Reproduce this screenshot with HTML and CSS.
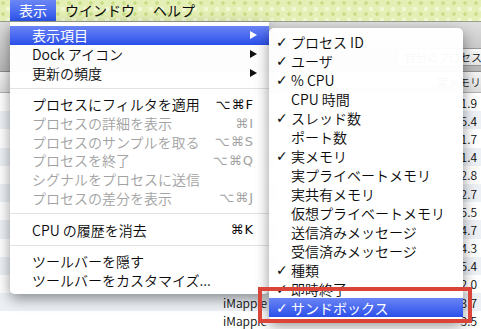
FILE: index.html
```html
<!DOCTYPE html>
<html lang="ja">
<head>
  <meta charset="UTF-8">
  <title>アクティビティモニタ - 表示メニュー</title>
  <link rel="stylesheet" href="styles.css">
</head>
<body>
  <div class="menubar">
    <span class="mb-item active">表示</span>
    <span class="mb-item">ウインドウ</span>
    <span class="mb-item">ヘルプ</span>
  </div>

  <!-- window behind the menus -->
  <div class="window">
    <div class="toolbar">
      <div class="filter">自分のプロセス</div>
    </div>
    <div class="thead">
      <span class="col-mem">実メモリ</span>
    </div>
    <div class="rows">
      <div class="row"><span class="col-name"></span><span class="col-mem">1.9</span></div>
      <div class="row"><span class="col-name"></span><span class="col-mem">5.4</span></div>
      <div class="row"><span class="col-name"></span><span class="col-mem">1.7</span></div>
      <div class="row"><span class="col-name"></span><span class="col-mem">1.4</span></div>
      <div class="row"><span class="col-name"></span><span class="col-mem">2.8</span></div>
      <div class="row"><span class="col-name"></span><span class="col-mem">2.7</span></div>
      <div class="row"><span class="col-name"></span><span class="col-mem">5.5</span></div>
      <div class="row"><span class="col-name"></span><span class="col-mem">4.7</span></div>
      <div class="row"><span class="col-name"></span><span class="col-mem">4.3</span></div>
      <div class="row"><span class="col-name"></span><span class="col-mem">5.4</span></div>
      <div class="row"><span class="col-name"></span><span class="col-mem">2.0</span></div>
      <div class="row"><span class="col-name">iMappie</span><span class="col-mem">3.7</span></div>
      <div class="row"><span class="col-name">iMappie</span><span class="col-mem">3.5</span></div>
    </div>
  </div>

  <!-- 表示 menu -->
  <div class="menu main-menu">
    <div class="item selected"><span>表示項目</span><span class="arrow"></span></div>
    <div class="item"><span>Dock アイコン</span><span class="arrow"></span></div>
    <div class="item"><span>更新の頻度</span><span class="arrow"></span></div>
    <div class="sep"></div>
    <div class="item"><span>プロセスにフィルタを適用</span><span class="key">⌥⌘F</span></div>
    <div class="item disabled"><span>プロセスの詳細を表示</span><span class="key">⌘I</span></div>
    <div class="item disabled"><span>プロセスのサンプルを取る</span><span class="key">⌥⌘S</span></div>
    <div class="item disabled"><span>プロセスを終了</span><span class="key">⌥⌘Q</span></div>
    <div class="item disabled"><span>シグナルをプロセスに送信</span></div>
    <div class="item disabled"><span>プロセスの差分を表示</span><span class="key">⌥⌘J</span></div>
    <div class="sep"></div>
    <div class="item"><span>CPU の履歴を消去</span><span class="key">⌘K</span></div>
    <div class="sep"></div>
    <div class="item"><span>ツールバーを隠す</span></div>
    <div class="item"><span>ツールバーをカスタマイズ...</span></div>
  </div>

  <!-- 表示項目 submenu -->
  <div class="menu sub-menu">
    <div class="item"><span class="check">✓</span>プロセス ID</div>
    <div class="item"><span class="check">✓</span>ユーザ</div>
    <div class="item"><span class="check">✓</span>% CPU</div>
    <div class="item"><span class="check"></span>CPU 時間</div>
    <div class="item"><span class="check">✓</span>スレッド数</div>
    <div class="item"><span class="check"></span>ポート数</div>
    <div class="item"><span class="check">✓</span>実メモリ</div>
    <div class="item"><span class="check"></span>実プライベートメモリ</div>
    <div class="item"><span class="check"></span>実共有メモリ</div>
    <div class="item"><span class="check"></span>仮想プライベートメモリ</div>
    <div class="item"><span class="check"></span>送信済みメッセージ</div>
    <div class="item"><span class="check"></span>受信済みメッセージ</div>
    <div class="item"><span class="check">✓</span>種類</div>
    <div class="item"><span class="check">✓</span>即時終了</div>
    <div class="item selected"><span class="check">✓</span>サンドボックス</div>
  </div>

  <div class="callout"></div>
</body>
</html>
```

FILE: styles.css
```css
body {
  margin: 0;
  width: 481px;
  height: 329px;
  overflow: hidden;
  position: relative;
  background: #fff;
  font-family: "Noto Sans CJK JP", sans-serif;
  font-size: 14px;
  font-weight: 350;
  color: #0a0a0a;
}

/* menu bar */
.menubar {
  height: 22px;
  display: flex;
  padding-left: 10px;
  background-color: #e3efb4;
  background-image:
    radial-gradient(circle at 3px 3px, #c9de86 1.5px, transparent 2px),
    radial-gradient(circle at 8px 9px, #f2f8d6 2px, transparent 2.5px);
  background-size: 11px 11px, 11px 11px;
  border-bottom: 1px solid #9aa08a;
  box-sizing: border-box;
}
.mb-item {
  padding: 0 9px;
  line-height: 21px;
  font-weight: 400;
}
.mb-item.active {
  color: #fff;
  background: linear-gradient(#6b86f4, #2d55ec);
}

/* activity monitor window behind */
.window {
  display: flex;
  flex-direction: column;
}
.toolbar {
  height: 50px;
  background: linear-gradient(#dedede, #b6b6b6);
  border-bottom: 1px solid #8c8c8c;
  display: flex;
  justify-content: flex-end;
  align-items: flex-end;
  padding-bottom: 5px;
  box-sizing: border-box;
}
.filter {
  width: 76px;
  height: 16px;
  font-size: 11px;
  line-height: 16px;
  padding-left: 7px;
  white-space: nowrap;
  overflow: hidden;
  background: linear-gradient(#fafafa, #e6e6e6);
  border: 1px solid #999;
  border-radius: 3px 0 0 3px;
  border-right: none;
}
.thead {
  height: 21px;
  display: flex;
  align-items: center;
  justify-content: flex-end;
  font-size: 11px;
  color: #222;
  background: linear-gradient(#f4f4f4, #dcdcdc);
  border-bottom: 1px solid #b0b0b0;
  box-sizing: border-box;
}
.thead .col-mem {
  margin-right: 0;
}
.row {
  height: 18.2px;
  display: flex;
  align-items: center;
  justify-content: space-between;
  font-size: 12px;
}
.row:nth-child(even) {
  background: #edf1f6;
}
.col-name {
  padding-left: 223px;
}
.col-mem {
  margin-right: 4px;
  white-space: nowrap;
}

/* menus */
.menu {
  position: absolute;
  background: rgba(255, 255, 255, 0.97);
  box-shadow: 0 5px 14px rgba(0, 0, 0, 0.42);
}
.main-menu {
  left: 10px;
  top: 22px;
  width: 259px;
  padding: 4px 0 5px;
  border-radius: 0 0 5px 5px;
}
.sub-menu {
  left: 269px;
  top: 28px;
  width: 194px;
  padding: 4px 0;
  border-radius: 5px;
}
.item {
  display: flex;
  align-items: center;
  justify-content: space-between;
  height: 18.7px;
  padding: 0 15px 0 22px;
  white-space: nowrap;
}
.sub-menu .item {
  height: 19px;
  justify-content: flex-start;
  padding: 0;
}
.item.selected {
  color: #fff;
  font-weight: 400;
  background: linear-gradient(#6a84f5, #2b50ea);
}
.item.disabled {
  color: #a2a2a2;
}
.sep {
  height: 13px;
  display: flex;
  align-items: center;
}
.sep::after {
  content: "";
  flex: 1;
  height: 1px;
  background: #e2e2e2;
}
.key {
  font-family: "DejaVu Sans", sans-serif;
  font-size: 13px;
  font-weight: normal;
  letter-spacing: 1px;
}
.arrow {
  width: 0;
  height: 0;
  margin-right: -3px;
  border-top: 4.5px solid transparent;
  border-bottom: 4.5px solid transparent;
  border-left: 7px solid #111;
}
.selected .arrow {
  border-left-color: #fff;
}
.check {
  width: 22px;
  padding-left: 7px;
  box-sizing: border-box;
  font-family: "DejaVu Sans", sans-serif;
  font-size: 14px;
  font-weight: bold;
}

/* red highlight box around the last row */
.callout {
  position: absolute;
  left: 258px;
  top: 287px;
  width: 214px;
  height: 36px;
  box-sizing: border-box;
  border: 4px solid #db4438;
}
```
